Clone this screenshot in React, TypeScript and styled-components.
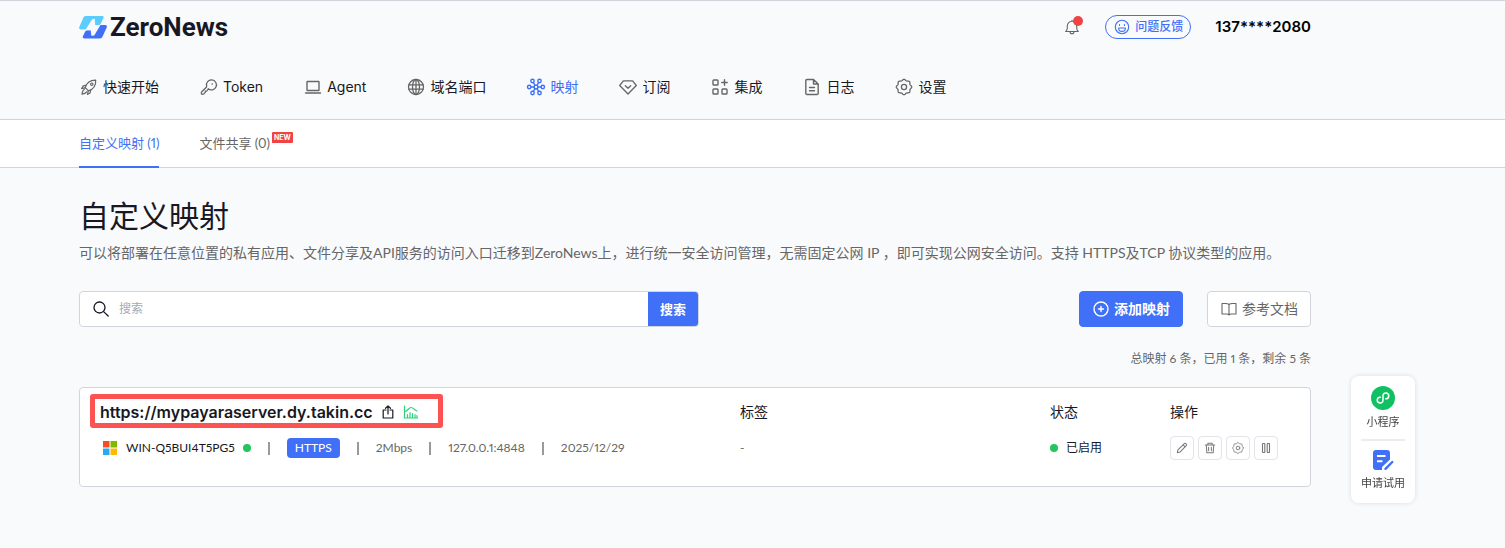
import React from 'react';
import styled, { createGlobalStyle } from 'styled-components';

const c = {
  ink: '#171824',
  grey: '#666666',
  line: '#d1d5db',
  blue: '#3f70f7',
  green: '#22c55e',
  page: '#f9fafc',
};

const wideFont = 'Inter, "Noto Sans CJK SC", sans-serif';

const GlobalStyle = createGlobalStyle`
  * { box-sizing: border-box; }
  body {
    margin: 0;
    background: ${c.page};
    color: ${c.ink};
    font-family: Lato, "Noto Sans CJK SC", sans-serif;
    font-size: 14px;
    line-height: 20px;
    font-variant-numeric: proportional-nums;
  }
  h1, h2, h3, p, ul { margin: 0; padding: 0; font-weight: 400; }
  ul { list-style: none; }
  a { color: inherit; text-decoration: none; }
  button, input { font: inherit; color: inherit; }
  button { cursor: pointer; }
  svg { display: block; flex: none; }
`;

const Container = styled.div`
  max-width: 1311px;
  padding-left: 79px;
`;

const Header = styled.header`
  border-top: 1px solid ${c.line};
  border-bottom: 1px solid ${c.line};
`;

const TopBar = styled.div`
  display: flex;
  align-items: center;
  height: 52px;
`;

const Brand = styled.a`
  display: flex;
  align-items: center;
  gap: 3px;
  margin-right: auto;
  font-family: Roboto, sans-serif;
  font-size: 26px;
  line-height: 30px;
  font-weight: 700;
`;

const BellButton = styled.button`
  position: relative;
  padding: 0;
  border: 0;
  background: none;
  color: ${c.grey};
`;

const BellDot = styled.span`
  position: absolute;
  top: -3px;
  right: -3px;
  width: 10px;
  height: 10px;
  border-radius: 50%;
  background: #f04444;
`;

const FeedbackButton = styled.button`
  display: flex;
  align-items: center;
  gap: 5px;
  height: 24px;
  margin: 0 24px 0 25px;
  padding: 0 7px 0 8px;
  border: 1px solid ${c.blue};
  border-radius: 12px;
  background: none;
  color: ${c.blue};
  font-size: 12px;
  font-weight: 500;
`;

const Account = styled.span`
  color: #000;
  font-family: ${wideFont};
  font-size: 15px;
  font-weight: 600;
`;

const Nav = styled.nav`
  display: flex;
  gap: 40px;
  height: 66px;
  padding-top: 2px;
  font-family: ${wideFont};
`;

const NavLink = styled.a<{ $active?: boolean }>`
  display: flex;
  align-items: center;
  gap: 4px;
  white-space: nowrap;
  color: ${(p) => (p.$active ? c.blue : c.ink)};
  svg { color: ${(p) => (p.$active ? c.blue : c.grey)}; }
`;

const SubNav = styled.nav`
  border-bottom: 1px solid ${c.line};
  background: #fff;
`;

const Tabs = styled.div`
  display: flex;
  gap: 40px;
  height: 47px;
`;

const Tab = styled.a<{ $active?: boolean }>`
  display: flex;
  align-items: center;
  gap: 2px;
  margin-bottom: -1px;
  border-bottom: 2px solid ${(p) => (p.$active ? c.blue : 'transparent')};
  color: ${(p) => (p.$active ? c.blue : c.grey)};
  font-size: 13px;
`;

const NewBadge = styled.span`
  margin-bottom: 12px;
  padding: 0 2px;
  border-radius: 1px 1px 1px 0;
  background: #f04444;
  color: #fff;
  font-family: ${wideFont};
  font-size: 7px;
  line-height: 11px;
  font-weight: 700;
`;

const Main = styled.main`
  padding: 27px 0 40px;
`;

const PageTitle = styled.h1`
  font-size: 30px;
  line-height: 40px;
`;

const Lead = styled.p`
  margin-top: 8px;
  color: ${c.grey};
  line-height: 20px;
`;

const Toolbar = styled.div`
  display: flex;
  align-items: center;
  gap: 24px;
  margin-top: 28px;
`;

const SearchForm = styled.form`
  display: flex;
  flex: 0 1 620px;
  align-items: center;
  height: 36px;
  margin-right: auto;
  padding-left: 13px;
  border: 1px solid ${c.line};
  border-radius: 4px;
  background: #fff;
  overflow: hidden;
`;

const SearchInput = styled.input`
  flex: 1;
  min-width: 0;
  padding: 0 10px;
  border: 0;
  outline: 0;
  background: none;
  font-size: 12px;
  &::placeholder { color: #a3abb8; }
`;

const SearchButton = styled.button`
  align-self: stretch;
  padding: 0 12px;
  border: 0;
  background: ${c.blue};
  color: #fff;
  font-size: 13px;
  font-weight: 700;
`;

const ToolButton = styled.button<{ $primary?: boolean }>`
  display: flex;
  align-items: center;
  gap: 5px;
  height: 36px;
  padding: 0 12px 0 13px;
  border: 1px solid ${(p) => (p.$primary ? c.blue : c.line)};
  border-radius: 4px;
  background: ${(p) => (p.$primary ? c.blue : '#fff')};
  color: ${(p) => (p.$primary ? '#fff' : c.grey)};
  font-weight: ${(p) => (p.$primary ? 700 : 400)};
  white-space: nowrap;
`;

const Quota = styled.p`
  margin-top: 22px;
  color: ${c.grey};
  font-size: 12px;
  text-align: right;
`;

const Card = styled.article`
  display: grid;
  grid-template-columns: 1fr 310px 120px 120px;
  margin-top: 18px;
  padding: 12px 20px 26px;
  border: 1px solid ${c.line};
  border-radius: 4px;
  background: #fff;
`;

const Column = styled.div`
  display: grid;
  grid-auto-rows: 24px;
  row-gap: 12px;
  align-items: center;
  min-width: 0;
`;

const UrlRow = styled.div`
  position: relative;
  display: flex;
  align-items: center;
  gap: 8px;
  height: 24px;
`;

const Highlight = styled.span`
  position: absolute;
  top: -6px;
  left: -10px;
  width: 353px;
  height: 34px;
  border: 5px solid #fc5252;
  border-radius: 3px;
  pointer-events: none;
`;

const Url = styled.a`
  font-family: ${wideFont};
  font-size: 16px;
  font-weight: 600;
`;

const IconButton = styled.button<{ $tone?: string }>`
  padding: 0;
  border: 0;
  background: none;
  color: ${(p) => p.$tone ?? c.ink};
`;

const MetaRow = styled.div`
  display: flex;
  align-items: center;
  gap: 17px;
  padding-left: 3px;
  color: ${c.grey};
  font-size: 12px;
  white-space: nowrap;
`;

const Host = styled.span`
  display: flex;
  align-items: center;
  gap: 8px;
  color: ${c.ink};
`;

const Dot = styled.span`
  width: 8px;
  height: 8px;
  border-radius: 50%;
  background: ${c.green};
`;

const Divider = styled.span`
  width: 2px;
  height: 13px;
  background: #9a9a9a;
`;

const Protocol = styled.span`
  padding: 0 8px;
  border-radius: 4px;
  background: ${c.blue};
  color: #fff;
`;

const ColumnTitle = styled.h3`
  font-size: 14px;
`;

const Status = styled.span`
  display: flex;
  align-items: center;
  gap: 8px;
  font-size: 12px;
`;

const Empty = styled.span`
  color: ${c.grey};
  font-size: 12px;
`;

const Actions = styled.div`
  display: flex;
  gap: 4px;
`;

const ActionButton = styled.button`
  display: grid;
  place-items: center;
  width: 24px;
  height: 24px;
  padding: 0;
  border: 1px solid #e2e4e9;
  border-radius: 4px;
  background: #fff;
  color: #777;
`;

const FloatPanel = styled.aside`
  position: fixed;
  right: 90px;
  bottom: 45px;
  padding: 10px 10px 12px;
  border-radius: 8px;
  background: #fff;
  box-shadow: 0 0 5px rgba(0, 0, 0, 0.12);
  color: #444;
  font-size: 11px;
  line-height: 16px;
`;

const FloatItem = styled.a`
  display: flex;
  flex-direction: column;
  align-items: center;
  gap: 4px;
  & + & {
    margin-top: 9px;
    padding-top: 8px;
    border-top: 2px solid #ececec;
  }
`;

type IconProps = { size?: number; box?: number; weight?: number; children: React.ReactNode };

const Icon = ({ size = 20, box = 20, weight = 1.2, children }: IconProps) => (
  <svg
    width={size}
    height={size}
    viewBox={`0 0 ${box} ${box}`}
    fill="none"
    stroke="currentColor"
    strokeWidth={weight}
    strokeLinecap="round"
    strokeLinejoin="round"
    aria-hidden="true"
  >
    {children}
  </svg>
);

const gearPath = Array.from({ length: 96 }, (_, i) => {
  const a = (i / 96) * Math.PI * 2;
  const r = 7.1 + 0.6 * Math.cos(a * 8);
  return `${i ? 'L' : 'M'}${(10 + r * Math.cos(a)).toFixed(2)} ${(10 + r * Math.sin(a)).toFixed(2)}`;
}).join('') + 'Z';

const Gear = ({ size = 20 }: { size?: number }) => (
  <Icon size={size} weight={1.3}>
    <path d={gearPath} />
    <circle cx="10" cy="10" r="2.6" />
  </Icon>
);

const Rocket = () => (
  <Icon>
    <path d="M6.2 10.6C7.6 6.3 10.6 3 16.7 3.2C17 9 13.9 12.4 9.5 13.9Z" />
    <circle cx="12.8" cy="7.2" r="1.2" />
    <path d="M7 8.4L4.3 8.9L2.6 11.6L6.2 10.9M11.6 13L11.2 15.8L8.5 17.4L9.2 14M5.2 12.4C3.4 13.4 3.2 15 2.9 17.2C5.2 17 6.7 16.6 7.6 14.9" />
  </Icon>
);

const Key = () => (
  <Icon weight={1.3}>
    <path d="M9.2 11.7A5 5 0 1 0 7.6 9.1C7.7 9.7 7.7 9.9 7.3 10.3L2.8 14.8C2.2 15.4 2.2 16.2 2.4 16.8C3.1 17.5 4.2 17.5 4.8 16.9L6.3 15.4V14.1H7.6L9.2 12.4Z" />
    <circle cx="13.2" cy="7" r="0.8" fill="currentColor" stroke="none" />
  </Icon>
);

const Laptop = () => (
  <Icon weight={1.4}>
    <rect x="4" y="4.5" width="12" height="9" rx="0.5" />
    <path d="M2.5 16H17.5" />
  </Icon>
);

const Globe = () => (
  <Icon weight={1.3}>
    <circle cx="10" cy="10" r="7.5" />
    <ellipse cx="10" cy="10" rx="3.5" ry="7.5" />
    <path d="M10 2.5V17.5M2.8 7.8H17.2M2.8 12.2H17.2" />
  </Icon>
);

const Network = () => (
  <Icon weight={1.4}>
    <circle cx="10" cy="10" r="1.9" />
    <circle cx="3.2" cy="10" r="1.7" />
    <circle cx="16.8" cy="10" r="1.7" />
    <circle cx="6.5" cy="4" r="1.7" />
    <circle cx="13.5" cy="4" r="1.7" />
    <circle cx="6.5" cy="16" r="1.7" />
    <circle cx="13.5" cy="16" r="1.7" />
    <path d="M4.9 10H8.1M11.9 10H15.1M7.4 5.5L9 8.4M12.6 5.5L11 8.4M7.4 14.5L9 11.6M12.6 14.5L11 11.6" />
  </Icon>
);

const Diamond = () => (
  <Icon weight={1.3}>
    <path d="M5.4 3.8H14.6L18.3 8.5L10 17L1.7 8.5ZM7.3 8.7L10 11.3L12.7 8.7" />
  </Icon>
);

const Apps = () => (
  <Icon weight={1.4}>
    <rect x="3" y="3" width="5" height="5" rx="0.8" />
    <rect x="3" y="12" width="5" height="5" rx="0.8" />
    <rect x="12" y="12" width="5" height="5" rx="0.8" />
    <path d="M14.5 2.8V8.2M11.8 5.5H17.2" />
  </Icon>
);

const FileText = () => (
  <Icon weight={1.4}>
    <path d="M11.5 2.5H5A1.2 1.2 0 0 0 3.8 3.7V16.3A1.2 1.2 0 0 0 5 17.5H15A1.2 1.2 0 0 0 16.2 16.3V7ZM11.5 2.5V7H16.2M7.5 10.5H12.5M7.5 13.7H12.5" />
  </Icon>
);

const Bell = () => (
  <Icon size={16} box={16} weight={1.1}>
    <path d="M1.7 12.5C2.9 11.6 3.3 10.8 3.3 9V7A4.7 4.7 0 0 1 12.7 7V9C12.7 10.8 13.1 11.6 14.3 12.5ZM6 12.7A2 2 0 0 0 10 12.7M8 2.2V1.2" />
  </Icon>
);

const Smile = () => (
  <Icon size={16} box={16} weight={1.1}>
    <circle cx="8" cy="8" r="6.7" />
    <path d="M4.6 9H11.4A3.4 3.4 0 0 1 4.6 9ZM5.5 5.6V6.4M10.5 5.6V6.4" />
  </Icon>
);

const Search = () => (
  <Icon size={16} box={16} weight={1.3}>
    <circle cx="6.5" cy="6.5" r="5.5" />
    <path d="M10.6 10.6L15.2 15" />
  </Icon>
);

const PlusCircle = () => (
  <Icon size={16} box={16} weight={1.4}>
    <circle cx="8" cy="8" r="7" />
    <path d="M8 5.5V10.5M5.5 8H10.5" />
  </Icon>
);

const Book = () => (
  <Icon size={16} box={16} weight={1.1}>
    <path d="M8 3.5C7 2.5 6 2.5 4.5 2.5H1V13H5.5C6.8 13 7.5 13.3 8 14C8.5 13.3 9.2 13 10.5 13H15V2.5H11.5C10 2.5 9 2.5 8 3.5ZM8 3.5V14" />
  </Icon>
);

const Share = () => (
  <Icon size={14} box={14} weight={1.2}>
    <path d="M5 5H2.2V13H11.8V5H9M7 9V1M4.5 3.3L7 0.9L9.5 3.3" />
  </Icon>
);

const Chart = () => (
  <Icon size={16} box={16} weight={1.2}>
    <path d="M1.5 2V14H14.5M1.8 7.5C5 7 5.5 3.5 8 3.5C10.500 3.5 11 6 14 7M4.5 13.5V10.500M7 13.5V8.5M9.5 13.5V9.5M12 13.5V10.5M14 13.5V11.5" />
  </Icon>
);

const Pencil = () => (
  <Icon size={12} box={14} weight={1.2}>
    <path d="M1.6 12.4L2.2 9.3L9.7 1.9C10.5 1.2 11.3 1.4 11.9 2.1C12.6 2.8 12.7 3.5 12 4.3L4.6 11.7ZM8.4 3.3L10.7 5.6" />
  </Icon>
);

const Trash = () => (
  <Icon size={12} box={14} weight={1.2}>
    <path d="M1.5 3.5H12.5M4.5 3.3V1.4H9.5V3.3M2.7 3.7L3.3 12.5H10.7L11.3 3.7M5.4 6V10.2M8.6 6V10.2" />
  </Icon>
);

const Pause = () => (
  <Icon size={14} box={14} weight={1.1}>
    <rect x="3.5" y="2.5" width="2.3" height="9" rx="0.4" />
    <rect x="8.2" y="2.5" width="2.3" height="9" rx="0.4" />
  </Icon>
);

const Windows = () => (
  <svg width="15" height="14" viewBox="0 0 15 14" aria-hidden="true">
    <path fill="#f25022" d="M0 0h6.5v6.5H0z" />
    <path fill="#7fba00" d="M7.5 0h6.5v6.5H7.5z" />
    <path fill="#28aaf2" d="M0 7.5h6.5V14H0z" />
    <path fill="#ffb900" d="M7.5 7.5h6.5V14H7.5z" />
  </svg>
);

const Logo = () => (
  <svg width="28" height="23" viewBox="0 0 28 23" aria-hidden="true">
    <path fill="#5accff" d="M7 0H23C24.5 0 25 1 24.4 2.3L21.8 7.5C21.3 8.5 20.6 9 19.5 9H14L8 13.4H2C0.3 13.4-0.4 12.2 0.3 10.9L4.3 1.8C4.9 0.6 5.7 0 7 0Z" />
    <path fill="#3f70f7" d="M19 9H26C27.700 9 28.3 10.2 27.7 11.5L23.6 20.6C23 21.9 22.2 22.5 20.9 22.5H5.5C3.9 22.5 3.3 21.4 3.9 20.2L6 16C6.5 14.900 7.3 14.3 8.5 14.3H13Z" />
    <path fill={c.page} d="M13.200 3.200L15.800 2.800L16.200 9H21.500L15.200 19.400L12.300 19.700L11.700 14.300H6.200Z" />
  </svg>
);

const MiniProgram = () => (
  <svg width="24" height="24" viewBox="0 0 24 24" aria-hidden="true">
    <circle cx="12" cy="12" r="12" fill="#0fc163" />
    <path
      d="M9.3 11.2A2.9 2.9 0 1 0 12 14.5V9.5A2.9 2.9 0 1 1 14.7 12.8"
      fill="none"
      stroke="#fff"
      strokeWidth="1.5"
      strokeLinecap="round"
    />
  </svg>
);

const Apply = () => (
  <svg width="22" height="22" viewBox="0 0 22 22" aria-hidden="true">
    <path fill={c.blue} d="M4 1H15A3 3 0 0 1 18 4V10.5L10 18V21H4A3 3 0 0 1 1 18V4A3 3 0 0 1 4 1Z" />
    <path d="M5 7H13.5M5 12.3H10.5" stroke="#fff" strokeWidth="2" />
    <path d="M13.5 19.8L20.3 13" stroke={c.blue} strokeWidth="2.4" strokeLinecap="round" />
  </svg>
);

const navItems = [
  { label: '快速开始', icon: <Rocket /> },
  { label: 'Token', icon: <Key /> },
  { label: 'Agent', icon: <Laptop /> },
  { label: '域名端口', icon: <Globe /> },
  { label: '映射', icon: <Network />, active: true },
  { label: '订阅', icon: <Diamond /> },
  { label: '集成', icon: <Apps /> },
  { label: '日志', icon: <FileText /> },
  { label: '设置', icon: <Gear /> },
];

const actions = [
  { label: '编辑', icon: <Pencil /> },
  { label: '删除', icon: <Trash /> },
  { label: '设置', icon: <Gear size={14} /> },
  { label: '暂停', icon: <Pause /> },
];

export default function App() {
  return (
    <>
      <GlobalStyle />
      <Header>
        <Container>
          <TopBar>
            <Brand href="#">
              <Logo />
              ZeroNews
            </Brand>
            <BellButton type="button" aria-label="通知">
              <Bell />
              <BellDot />
            </BellButton>
            <FeedbackButton type="button">
              <Smile />
              问题反馈
            </FeedbackButton>
            <Account>137****2080</Account>
          </TopBar>
          <Nav>
            {navItems.map((item) => (
              <NavLink key={item.label} href="#" $active={item.active}>
                {item.icon}
                {item.label}
              </NavLink>
            ))}
          </Nav>
        </Container>
      </Header>
      <SubNav>
        <Container>
          <Tabs>
            <Tab href="#" $active>自定义映射 (1)</Tab>
            <Tab href="#">
              文件共享 (0)
              <NewBadge>NEW</NewBadge>
            </Tab>
          </Tabs>
        </Container>
      </SubNav>
      <Container>
        <Main>
          <PageTitle>自定义映射</PageTitle>
          <Lead>
            可以将部署在任意位置的私有应用、文件分享及API服务的访问入口迁移到ZeroNews上，进行统一安全访问管理，无需固定公网 IP ，即可实现公网安全访问。支持 HTTPS及TCP 协议类型的应用。
          </Lead>
          <Toolbar>
            <SearchForm onSubmit={(e) => e.preventDefault()}>
              <Search />
              <SearchInput type="text" placeholder="搜索" aria-label="搜索" />
              <SearchButton type="submit">搜索</SearchButton>
            </SearchForm>
            <ToolButton type="button" $primary>
              <PlusCircle />
              添加映射
            </ToolButton>
            <ToolButton type="button">
              <Book />
              参考文档
            </ToolButton>
          </Toolbar>
          <Quota>总映射 6 条，已用 1 条，剩余 5 条</Quota>
          <Card>
            <Column>
              <UrlRow>
                <Url href="#">https://mypayaraserver.dy.takin.cc</Url>
                <IconButton type="button" aria-label="分享"><Share /></IconButton>
                <IconButton type="button" aria-label="统计" $tone="#2fd07a"><Chart /></IconButton>
                <Highlight />
              </UrlRow>
              <MetaRow>
                <Host>
                  <Windows />
                  WIN-Q5BUI4T5PG5
                  <Dot />
                </Host>
                <Divider />
                <Protocol>HTTPS</Protocol>
                <Divider />
                <span>2Mbps</span>
                <Divider />
                <span>127.0.0.1:4848</span>
                <Divider />
                <span>2025/12/29</span>
              </MetaRow>
            </Column>
            <Column>
              <ColumnTitle>标签</ColumnTitle>
              <Empty>-</Empty>
            </Column>
            <Column>
              <ColumnTitle>状态</ColumnTitle>
              <Status>
                <Dot />
                已启用
              </Status>
            </Column>
            <Column>
              <ColumnTitle>操作</ColumnTitle>
              <Actions>
                {actions.map((a) => (
                  <ActionButton key={a.label} type="button" aria-label={a.label}>
                    {a.icon}
                  </ActionButton>
                ))}
              </Actions>
            </Column>
          </Card>
        </Main>
      </Container>
      <FloatPanel>
        <FloatItem href="#">
          <MiniProgram />
          小程序
        </FloatItem>
        <FloatItem href="#">
          <Apply />
          申请试用
        </FloatItem>
      </FloatPanel>
    </>
  );
}
